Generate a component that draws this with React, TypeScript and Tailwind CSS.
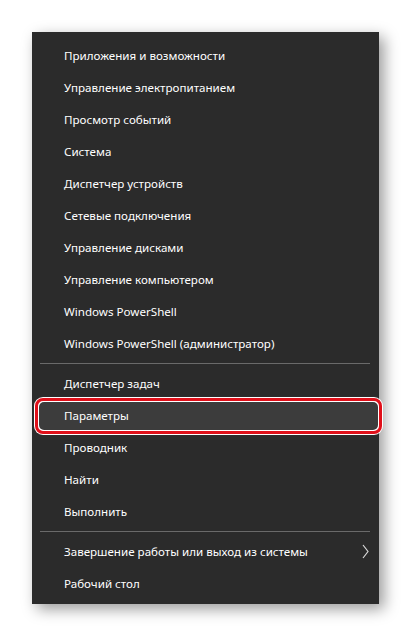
import React from "react";

const group1 = [
  "Приложения и возможности",
  "Управление электропитанием",
  "Просмотр событий",
  "Система",
  "Диспетчер устройств",
  "Сетевые подключения",
  "Управление дисками",
  "Управление компьютером",
  "Windows PowerShell",
  "Windows PowerShell (администратор)",
];
const group2 = ["Диспетчер задач", "Параметры", "Проводник", "Найти", "Выполнить"];

function Row({ text, highlight, chevron }: { text: string; highlight?: boolean; chevron?: boolean }) {
  return (
    <div className="relative h-8 flex items-center pl-8">
      {highlight && (
        <div className="absolute left-[2px] right-[-4px] top-[-2px] bottom-[-4px] rounded-[9px] bg-white p-px">
          <div className="h-full w-full rounded-[8px] border-[3px] border-[#e0101a] bg-white p-px">
            <div className="h-full w-full rounded-[5px] bg-[#3c3c3c]" />
          </div>
        </div>
      )}
      <span className="relative z-10 mt-px text-[11.6px] text-white leading-none">{text}</span>
      {chevron && (
        <svg className="absolute right-[10px] top-[9px]" width="7" height="15" viewBox="0 0 7 15">
          <path d="M1 1 L6 7.5 L1 14" fill="none" stroke="#d8d8d8" strokeWidth="1.2" />
        </svg>
      )}
    </div>
  );
}

export default function App() {
  return (
    <div className="w-[411px] h-[637px] bg-white pt-8 pl-8" style={{ fontFamily: '"Noto Sans", "Open Sans", sans-serif' }}>
      <div className="w-[347px] h-[572px] bg-[#2b2b2b] pt-[7px] shadow-[5px_5px_14px_rgba(0,0,0,0.4)]">
        {group1.map((t) => (
          <Row key={t} text={t} />
        ))}
        <div className="ml-2 mr-[9px] mt-1 mb-[3px] h-px bg-[#6a6a6a]" />
        {group2.map((t) => (
          <Row key={t} text={t} highlight={t === "Параметры"} />
        ))}
        <div className="ml-2 mr-[9px] mt-1 mb-[3px] h-px bg-[#6a6a6a]" />
        <Row text="Завершение работы или выход из системы" chevron />
        <Row text="Рабочий стол" />
      </div>
    </div>
  );
}
